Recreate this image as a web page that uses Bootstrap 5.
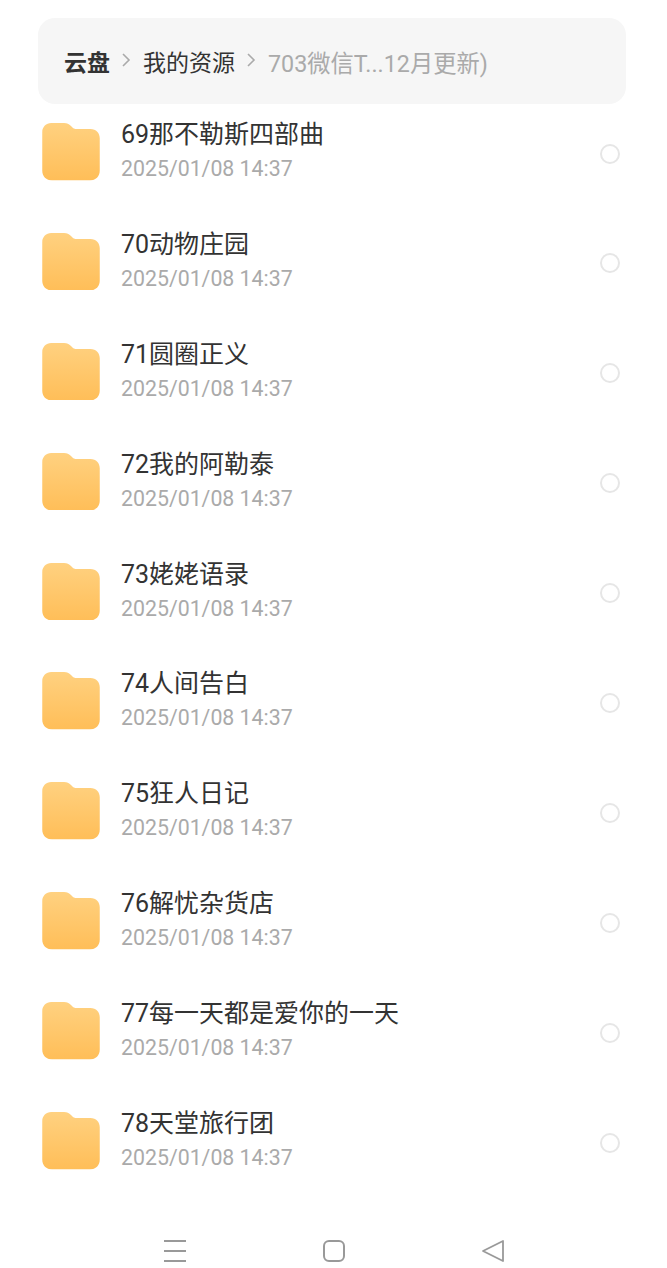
<!DOCTYPE html>
<html lang="zh-CN">
<head>
    <meta charset="UTF-8">
    <meta name="viewport" content="width=device-width, initial-scale=1.0">
    <title>云盘</title>
    <link href="https://cdn.jsdelivr.net/npm/bootstrap@5.3.0/dist/css/bootstrap.min.css" rel="stylesheet">
    <style>
        body { font-family: Roboto, "Noto Sans CJK SC", sans-serif; background: #fff; width: 667px; height: 1268px; overflow: hidden; }
        .crumb-box { margin: 18px 41px 0 38px; height: 86px; padding: 6px 26px 0; background: #f6f6f6; border-radius: 17px; font-size: 23px; color: #333; }
        .crumb-root { font-weight: 700; }
        .crumb-mid { margin-left: -1px; }
        .crumb-last { color: #aaa; font-size: 23.3px; margin-left: 1px; }
        .crumb-sep { margin: -8px 13px 0 11px; flex: none; }
        .crumb-sep2 { margin: -8px 11px 0 11px; flex: none; }
        .file-row { height: 109.9px; padding: 19px 47px 0 42px; }
        .folder-icon { flex: none; width: 58px; height: 57.5px; margin-right: 21px; }
        .file-name { font-size: 25px; line-height: 30px; color: #333; margin-top: -3px; }
        .file-date { font-size: 21.3px; line-height: 26px; color: #aaa; margin-top: 6px; }
        .pick-dot { flex: none; width: 20px; height: 20px; border: 2.5px solid #e6e6e6; border-radius: 50%; margin-top: 20.6px; }
        .nav-keys { height: 48px; margin-top: 24px; gap: 135px; }
    </style>
</head>
<body>

<div class="crumb-box d-flex align-items-center">
    <span class="crumb-root">云盘</span>
    <svg class="crumb-sep" width="10" height="16" viewBox="0 0 10 16"><path d="M2 2l6 6-6 6" fill="none" stroke="#aaa" stroke-width="1.6"/></svg>
    <span class="crumb-mid">我的资源</span>
    <svg class="crumb-sep2" width="10" height="16" viewBox="0 0 10 16"><path d="M2 2l6 6-6 6" fill="none" stroke="#aaa" stroke-width="1.6"/></svg>
    <span class="crumb-last">703微信T...12月更新)</span>
</div>

<svg width="0" height="0" class="d-block">
    <defs>
        <linearGradient id="folderFill" x1="0" y1="0" x2="0" y2="1">
            <stop offset="0" stop-color="#ffd180"/>
            <stop offset="1" stop-color="#ffbe58"/>
        </linearGradient>
        <symbol id="folder" viewBox="0 0 58 58">
            <path d="M9 0h13c3 0 5 1 7 3l1.500 1.500c1 1 2 1.500 4 1.500h14c6 0 9.500 4 9.500 9.500V48c0 6-4 10-10 10H10C4 58 0 54 0 48V9C0 4 4 0 9 0z" fill="url(#folderFill)"/>
        </symbol>
    </defs>
</svg>

<div id="fileList"></div>

<div class="nav-keys d-flex justify-content-center align-items-center">
    <svg width="24" height="24" viewBox="0 0 24 24"><path d="M1 2h22M1 12h22M1 22h22" stroke="#999" stroke-width="2" fill="none"/></svg>
    <svg width="24" height="24" viewBox="0 0 24 24"><rect x="2" y="2" width="20" height="20" rx="5" stroke="#999" stroke-width="2" fill="none"/></svg>
    <svg width="24" height="24" viewBox="0 0 24 24"><path d="M22 2v20L2 12z" stroke="#999" stroke-width="1.800" stroke-linejoin="round" fill="none"/></svg>
</div>

<script src="https://cdn.jsdelivr.net/npm/bootstrap@5.3.0/dist/js/bootstrap.bundle.min.js"></script>
<script>
const names = ["69那不勒斯四部曲", "70动物庄园", "71圆圈正义", "72我的阿勒泰", "73姥姥语录", "74人间告白", "75狂人日记", "76解忧杂货店", "77每一天都是爱你的一天", "78天堂旅行团"];
const fileList = document.getElementById("fileList");
names.forEach(name => {
    let row = document.createElement("div");
    row.className = "file-row d-flex align-items-start";
    row.innerHTML = `<svg class="folder-icon"><use href="#folder"/></svg>
        <div class="flex-grow-1">
            <div class="file-name">${name}</div>
            <div class="file-date">2025/01/08 14:37</div>
        </div>
        <div class="pick-dot"></div>`;
    fileList.appendChild(row);
});
</script>

</body>
</html>
